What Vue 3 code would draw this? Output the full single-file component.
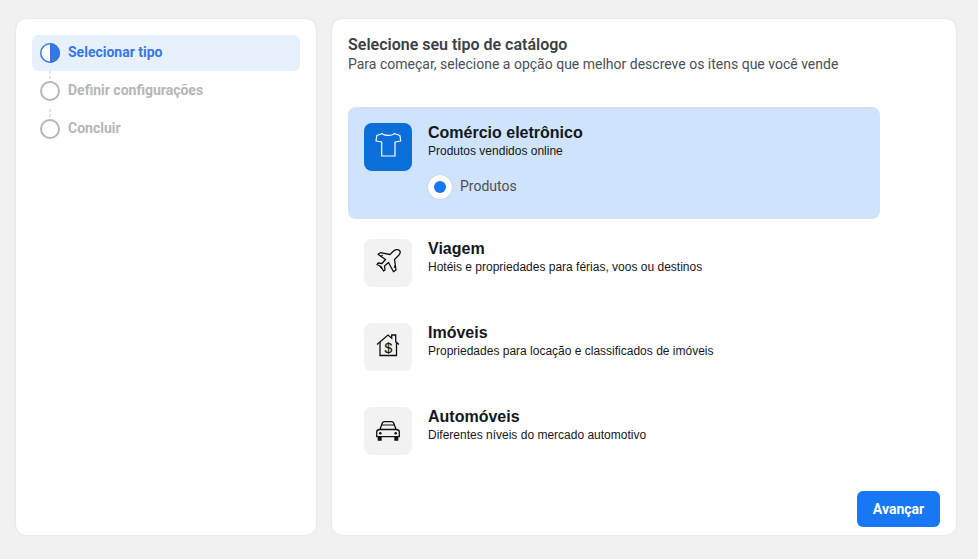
<template>
  <div class="page">
    <aside class="panel steps">
      <div v-for="(step, i) in steps" :key="step" class="step" :class="{ active: i === 0 }">
        <svg class="step-icon" width="20" height="20" viewBox="0 0 20 20">
          <template v-if="i === 0">
            <circle cx="10" cy="10" r="9.25" fill="#fff" stroke="#3578e5" stroke-width="1.5" />
            <path d="M10 0a10 10 0 0 1 0 20z" fill="#3578e5" />
          </template>
          <circle v-else cx="10" cy="10" r="9" fill="#fff" stroke="#b4b6ba" stroke-width="2" />
        </svg>
        <span>{{ step }}</span>
        <i v-if="i < steps.length - 1" class="dots"></i>
      </div>
    </aside>

    <main class="panel content">
      <h1>Selecione seu tipo de catálogo</h1>
      <p class="lead">Para começar, selecione a opção que melhor descreve os itens que você vende</p>

      <div class="options">
        <div class="option selected">
          <div class="icon">
            <svg width="48" height="48" viewBox="0 0 48 48" fill="none" stroke="#fff" stroke-width="1.2" stroke-linejoin="round">
              <path d="M18.500 10.500 12.800 12.500 12 18l5.700 1v14H31V19l5.700-1-.8-5.500-5.700-2c-1.500 2.400-10.700 2.400-11.700 0z" />
            </svg>
          </div>
          <div class="text">
            <h2>Comércio eletrônico</h2>
            <p>Produtos vendidos online</p>
            <div class="radio-row">
              <span class="radio"><b></b></span>
              <span class="radio-label">Produtos</span>
            </div>
          </div>
        </div>

        <div class="option">
          <div class="icon">
            <svg width="48" height="48" viewBox="0 0 48 48" fill="none" stroke="#111" stroke-width="1.3" stroke-linejoin="round">
              <path d="M35.500 11.500C34 10 31 10.500 29.500 12L26 15.500 16.500 13.700 14 15.200l7.500 5.300-3.500 4-4-.5-1 1.500 4 2 2.500 4.500 1.500-1-.5-4 4-3.500 5 9.300 2.500-1.800-1.500-10.500 3.500-3.500c1.500-1.500 3-4 1.500-5.500z" />
              <path d="M16 17.500l3-1.300M30 29l1.200-3M15.500 27.500l3.500 3.500" stroke-width="1" />
            </svg>
          </div>
          <div class="text">
            <h2>Viagem</h2>
            <p>Hotéis e propriedades para férias, voos ou destinos</p>
          </div>
        </div>

        <div class="option">
          <div class="icon">
            <svg width="48" height="48" viewBox="0 0 48 48" fill="none" stroke="#111" stroke-width="1.3">
              <path d="M13 21.500 24 12l3.700 3.200V12h4v6.700l3.300 2.800" />
              <path d="M16 19v13.500h16.500V19" />
              <text x="24.300" y="29.500" text-anchor="middle" class="dollar">$</text>
            </svg>
          </div>
          <div class="text">
            <h2>Imóveis</h2>
            <p>Propriedades para locação e classificados de imóveis</p>
          </div>
        </div>

        <div class="option">
          <div class="icon">
            <svg width="48" height="48" viewBox="0 0 48 48" fill="none" stroke="#111" stroke-width="1.3" stroke-linejoin="round">
              <path d="M16 22.500 18.300 16q.5-1.300 2-1.300h7.400q1.500 0 2 1.300L32 22.500" />
              <path d="M17.500 18h13" stroke-width="1" />
              <path d="M12.700 25q0-2.500 3.300-2.500h16q3.300 0 3.300 2.500v4.700H12.700z" />
              <circle cx="16.300" cy="26.300" r="1.300" fill="#111" stroke="none" />
              <circle cx="31.700" cy="26.300" r="1.300" fill="#111" stroke="none" />
              <path d="M13.700 30h4v3.700h-4zM30.300 30h4v3.700h-4z" fill="#111" stroke="none" />
            </svg>
          </div>
          <div class="text">
            <h2>Automóveis</h2>
            <p>Diferentes níveis do mercado automotivo</p>
          </div>
        </div>
      </div>

      <div class="footer">
        <button>Avançar</button>
      </div>
    </main>
  </div>
</template>

<script setup>
const steps = ['Selecionar tipo', 'Definir configurações', 'Concluir']
</script>

<style>
html, body {
  margin: 0;
  background: #f1f1f1;
}
</style>

<style scoped>
.page {
  box-sizing: border-box;
  width: 978px;
  height: 559px;
  padding: 19px 22px 24px 16px;
  display: flex;
  gap: 16px;
  font-family: Roboto, sans-serif;
  overflow: hidden;
}

.panel {
  box-sizing: border-box;
  background: #fff;
  border-radius: 10px;
  box-shadow: 0 0 2px rgba(0, 0, 0, 0.12);
}

.steps {
  width: 300px;
  flex: none;
  padding: 16px;
  display: flex;
  flex-direction: column;
  gap: 2px;
}

.step {
  position: relative;
  height: 36px;
  padding: 0 8px;
  border-radius: 6px;
  display: flex;
  align-items: center;
  gap: 8px;
  font-size: 14px;
  font-weight: 700;
  color: #b4b6ba;
}

.step span {
  padding-bottom: 2px;
}

.step.active {
  background: #e7f1fd;
  color: #3578e5;
}

.step-icon {
  flex: none;
}

.dots {
  position: absolute;
  left: 17px;
  top: 36px;
  width: 2px;
  height: 10px;
  background: repeating-linear-gradient(#e2e3e5 0 3px, transparent 3px 5px);
}

.content {
  flex: 1;
  padding: 16px;
  display: flex;
  flex-direction: column;
}

h1 {
  margin: 0;
  font-size: 16px;
  line-height: 19px;
  font-weight: 600;
  color: #3c3f45;
}

.lead {
  margin: 0;
  font-size: 14px;
  line-height: 20px;
  color: #4b4f56;
}

.options {
  width: 532px;
  margin-top: 33px;
  display: flex;
  flex-direction: column;
  gap: 4px;
}

.option {
  padding: 16px;
  border-radius: 8px;
  display: flex;
  gap: 16px;
}

.option.selected {
  padding-bottom: 20px;
  background: #cfe3fc;
}

.icon {
  width: 48px;
  height: 48px;
  flex: none;
  border-radius: 8px;
  background: #f2f2f2;
}

.icon svg {
  display: block;
}

.selected .icon {
  background: #0a6fd8;
}

.text h2 {
  margin: 0;
  font-family: "Liberation Sans", Arial, sans-serif;
  font-size: 16px;
  line-height: 20px;
  font-weight: 700;
  color: #14171c;
}

.text p {
  margin: 0;
  font-family: "Liberation Sans", Arial, sans-serif;
  font-size: 12px;
  line-height: 16px;
  color: #14171c;
}

.radio-row {
  margin-top: 16px;
  display: flex;
  align-items: center;
  gap: 8px;
}

.radio {
  width: 24px;
  height: 24px;
  border-radius: 50%;
  background: #fff;
  box-shadow: 0 0 1px rgba(0, 0, 0, 0.25);
  display: flex;
  align-items: center;
  justify-content: center;
}

.radio b {
  width: 12px;
  height: 12px;
  border-radius: 50%;
  background: #1877f2;
}

.radio-label {
  padding-bottom: 2px;
  font-size: 14px;
  color: #4b4f56;
}

.dollar {
  font-family: "Liberation Sans", Arial, sans-serif;
  font-size: 14px;
  fill: #111;
  stroke: #111;
  stroke-width: 0.2;
}

.footer {
  margin-top: auto;
  margin-bottom: -8px;
  display: flex;
  justify-content: flex-end;
}

button {
  width: 83px;
  height: 36px;
  border: none;
  border-radius: 6px;
  background: #1877f2;
  color: #fff;
  font-family: Roboto, sans-serif;
  font-size: 14px;
  font-weight: 700;
}
</style>
